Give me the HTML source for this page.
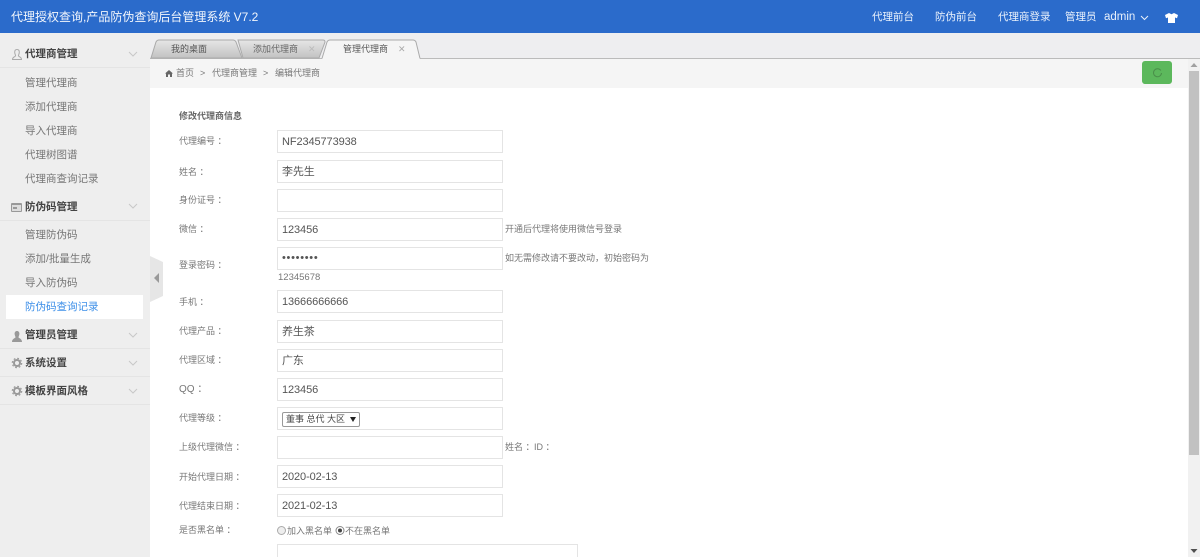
<!DOCTYPE html>
<html lang="zh"><head><meta charset="utf-8"><title>编辑代理商</title>
<style>
*{box-sizing:border-box;margin:0;padding:0}
html,body{width:1200px;height:557px;overflow:hidden;background:#fff}
body{position:relative;font-family:"Liberation Sans","Noto Sans CJK SC",sans-serif;font-size:10px;color:#666}
.a{position:absolute;white-space:nowrap}
#top{left:0;top:0;width:1200px;height:33px;background:#2b6bcb}
.t{color:#e8f0fb;font-size:10.500px;top:9px;line-height:16px}
#side{left:0;top:33px;width:150px;height:524px;background:#eee}
.g{left:25px;font-size:10.500px;font-weight:bold;color:#444;line-height:16px}
.m{left:25px;font-size:10.500px;color:#777;line-height:16px}
.ln{left:0;width:150px;height:1px;background:#e4e4e4}
.l{left:179px;font-size:9px;color:#777;line-height:14px}
.i{left:277px;width:226px;height:23px;background:#fff;border:1px solid #e4e4e4;padding-left:4px;font-size:11px;line-height:23px;color:#555;letter-spacing:-.1px}
.h{font-size:9px;color:#777;line-height:14px}
.c{font-size:9px;line-height:14px;color:#777;top:66px}
.b{top:42px;font-size:9px;line-height:14px;color:#555}
svg{position:absolute;overflow:visible}
</style></head><body>
<div class="a" id="top"></div>
<div class="a" style="left:11px;top:8px;color:#f2f6fc;font-size:12px;line-height:18px">代理授权查询,产品防伪查询后台管理系统 V7.2</div>
<div class="a t" style="left:872px">代理前台</div>
<div class="a t" style="left:935px">防伪前台</div>
<div class="a t" style="left:998px">代理商登录</div>
<div class="a t" style="left:1065px">管理员</div>
<div class="a t" style="left:1104px;font-size:11.500px">admin</div>
<svg style="left:1140px;top:15px" width="9" height="6"><path d="M1 1l3.500 3.500L8 1" fill="none" stroke="#e8f0fb" stroke-width="1"/></svg>
<svg style="left:1165px;top:13px" width="13" height="10"><path d="M4 0L0 2l1 3.200 2-.7V10h7V4.500l2 .7L13 2 9 0 6.500 1.200z" fill="#fff"/></svg>

<div class="a" id="side"></div>
<div class="a ln" style="top:67px"></div>
<div class="a ln" style="top:220px"></div>
<div class="a ln" style="top:348px"></div>
<div class="a ln" style="top:376px"></div>
<div class="a ln" style="top:404px"></div>
<div class="a" style="left:6px;top:295px;width:137px;height:24px;background:#fff"></div>

<svg style="left:12px;top:49px" width="10" height="11"><path d="M5 .5c1.600 0 2.300 1.200 2.300 2.700S6.400 6 6.400 6.800c0 1 3.100 1 3.100 3.700H.5C.5 7.800 3.600 7.800 3.600 6.800 3.600 6 2.700 4.700 2.700 3.200S3.400.5 5 .5z" fill="none" stroke="#aaa"/></svg>
<div class="a g" style="top:46px">代理商管理</div>
<div class="a m" style="top:75px">管理代理商</div>
<div class="a m" style="top:99px">添加代理商</div>
<div class="a m" style="top:123px">导入代理商</div>
<div class="a m" style="top:147px">代理树图谱</div>
<div class="a m" style="top:171px">代理商查询记录</div>
<svg style="left:11px;top:203px" width="11" height="9"><rect width="11" height="9" rx="1" fill="#999"/><rect x="1" y="2" width="9" height="6" fill="#ddd"/><rect x="2" y="4" width="4" height="2" fill="#999"/></svg>
<div class="a g" style="top:199px">防伪码管理</div>
<div class="a m" style="top:227px">管理防伪码</div>
<div class="a m" style="top:251px">添加/批量生成</div>
<div class="a m" style="top:275px">导入防伪码</div>
<div class="a m" style="top:299px;color:#3d8fe8">防伪码查询记录</div>
<svg style="left:12px;top:331px" width="10" height="11"><path d="M5 0c1.700 0 2.400 1.300 2.400 2.800S6.500 5.500 6.500 6.300c0 1 3.500 1.200 3.500 4.700H0c0-3.500 3.500-3.700 3.500-4.700C3.500 5.500 2.600 4.300 2.600 2.800S3.300 0 5 0z" fill="#999"/></svg>
<div class="a g" style="top:327px">管理员管理</div>
<svg style="left:12px;top:358px" width="10" height="10"><circle cx="5" cy="5" r="3" fill="none" stroke="#999" stroke-width="2"/><circle cx="5" cy="5" r="4.700" fill="none" stroke="#999" stroke-width="1.200" stroke-dasharray="1.800 1.900"/></svg>
<div class="a g" style="top:355px">系统设置</div>
<svg style="left:12px;top:386px" width="10" height="10"><circle cx="5" cy="5" r="3" fill="none" stroke="#999" stroke-width="2"/><circle cx="5" cy="5" r="4.700" fill="none" stroke="#999" stroke-width="1.200" stroke-dasharray="1.800 1.900"/></svg>
<div class="a g" style="top:383px">模板界面风格</div>
<svg style="left:128px;top:52px" width="10" height="340" fill="none" stroke="#c8c8c8"><path d="M1 0l4 4 4-4M1 152l4 4 4-4M1 281l4 4 4-4M1 309l4 4 4-4M1 337l4 4 4-4"/></svg>
<svg style="left:150px;top:256px" width="13" height="46"><path d="M0 0l13 6v34L0 46z" fill="#e6e6e6"/><path d="M9 17v10l-5-5z" fill="#999"/></svg>

<div class="a" style="left:150px;top:33px;width:1050px;height:25px;background:#eeeef0"></div>
<div class="a" style="left:150px;top:58px;width:1050px;height:1px;background:#bbb"></div>
<svg style="left:150px;top:39px" width="270" height="20">
<defs><linearGradient id="tg" x1="0" y1="0" x2="0" y2="1"><stop offset="0" stop-color="#e6e6e6"/><stop offset="1" stop-color="#c2c2c2"/></linearGradient></defs>
<path d="M88 1H173q2 0 2 2l-6 16H93z" fill="url(#tg)" stroke="#aaa"/>
<path d="M1 19L6 3q1-2 3-2h74q2 0 3 2l6 16z" fill="url(#tg)" stroke="#aaa"/>
<path d="M172 20L177 3q1-2 3-2h83q2 0 3 2l4 16.500V20z" fill="#f5f5f5"/>
<path d="M172 19.500L177 3q1-2 3-2h83q2 0 3 2l4 16.500" fill="none" stroke="#aaa"/>
</svg>
<div class="a b" style="left:171px">我的桌面</div>
<div class="a b" style="left:253px;color:#666">添加代理商</div>
<div class="a" style="left:308px;top:42px;font-size:9px;line-height:14px;color:#bbb">✕</div>
<div class="a b" style="left:343px">管理代理商</div>
<div class="a" style="left:398px;top:42px;font-size:9px;line-height:14px;color:#aaa">✕</div>

<div class="a" style="left:150px;top:59px;width:1038px;height:29px;background:#f5f5f5"></div>
<svg style="left:165px;top:70px" width="8" height="7"><path d="M4 0l4 3.500H7V7H5V4.500H3V7H1V3.500H0z" fill="#666"/></svg>
<div class="a c" style="left:176px">首页</div>
<div class="a c" style="left:200px">&gt;</div>
<div class="a c" style="left:212px">代理商管理</div>
<div class="a c" style="left:263px">&gt;</div>
<div class="a c" style="left:275px">编辑代理商</div>
<div class="a" style="left:1142px;top:61px;width:30px;height:23px;background:#5cb85c;border-radius:3px"></div>
<svg style="left:1153px;top:68px" width="9" height="9"><path d="M7.800 2.500A4 4 0 1 0 8.500 5" fill="none" stroke="#4a8f4a" stroke-width="1"/></svg>

<div class="a" style="left:1188px;top:59px;width:12px;height:498px;background:#f1f1f1"></div>
<div class="a" style="left:1189px;top:71px;width:10px;height:384px;background:#c1c1c1"></div>
<svg style="left:1190px;top:63px" width="8" height="5"><path d="M4 0l3.500 4H.5z" fill="#a0a0a0"/></svg>
<svg style="left:1190px;top:548px" width="8" height="5"><path d="M4 5L.5 1h7z" fill="#505050"/></svg>

<div class="a" style="left:179px;top:109px;font-size:9px;line-height:14px;font-weight:bold;color:#666">修改代理商信息</div>

<div class="a l" style="top:134px">代理编号 ：</div><div class="a i" style="top:130px">NF2345773938</div>
<div class="a l" style="top:165px">姓名 ：</div><div class="a i" style="top:160px">李先生</div>
<div class="a l" style="top:193px">身份证号 ：</div><div class="a i" style="top:189px"></div>
<div class="a l" style="top:222px">微信 ：</div><div class="a i" style="top:218px">123456</div>
<div class="a h" style="left:505px;top:222px">开通后代理将使用微信号登录</div>
<div class="a l" style="top:258px">登录密码 ：</div><div class="a i" style="top:247px;letter-spacing:.7px;line-height:21px">••••••••</div>
<div class="a h" style="left:505px;top:251px">如无需修改请不要改动，初始密码为</div>
<div class="a h" style="left:278px;top:271px;font-size:9.500px">12345678</div>
<div class="a l" style="top:295px">手机 ：</div><div class="a i" style="top:290px">13666666666</div>
<div class="a l" style="top:324px">代理产品 ：</div><div class="a i" style="top:320px">养生茶</div>
<div class="a l" style="top:353px">代理区域 ：</div><div class="a i" style="top:349px">广东</div>
<div class="a l" style="top:383px;font-size:10px">QQ ：</div><div class="a i" style="top:378px">123456</div>
<div class="a l" style="top:411px">代理等级 ：</div><div class="a i" style="top:407px"></div>
<div class="a" style="left:282px;top:412px;width:78px;height:15px;background:#fff;border:1px solid #999;border-radius:2px;font-size:9px;line-height:13px;padding-left:3px;color:#444">董事 总代 大区<span style="position:absolute;left:67px;top:4px;width:0;height:0;border:3px solid transparent;border-top:5px solid #222;border-bottom:0"></span></div>
<div class="a l" style="top:440px">上级代理微信 ：</div><div class="a i" style="top:436px"></div>
<div class="a h" style="left:505px;top:440px">姓名 ：</div>
<div class="a h" style="left:534px;top:440px">ID ：</div>
<div class="a l" style="top:470px">开始代理日期 ：</div><div class="a i" style="top:465px">2020-02-13</div>
<div class="a l" style="top:499px">代理结束日期 ：</div><div class="a i" style="top:494px">2021-02-13</div>
<div class="a l" style="top:523px">是否黑名单 ：</div>
<svg style="left:277px;top:526px" width="70" height="9"><circle cx="4.500" cy="4.500" r="4" fill="#eee" stroke="#aaa"/><circle cx="63" cy="4.500" r="4" fill="#fff" stroke="#888"/><circle cx="63" cy="4.500" r="2" fill="#444"/></svg>
<div class="a h" style="left:287px;top:524px">加入黑名单</div>
<div class="a h" style="left:345px;top:524px">不在黑名单</div>
<div class="a" style="left:277px;top:544px;width:301px;height:30px;background:#fff;border:1px solid #e4e4e4"></div>
</body></html>
